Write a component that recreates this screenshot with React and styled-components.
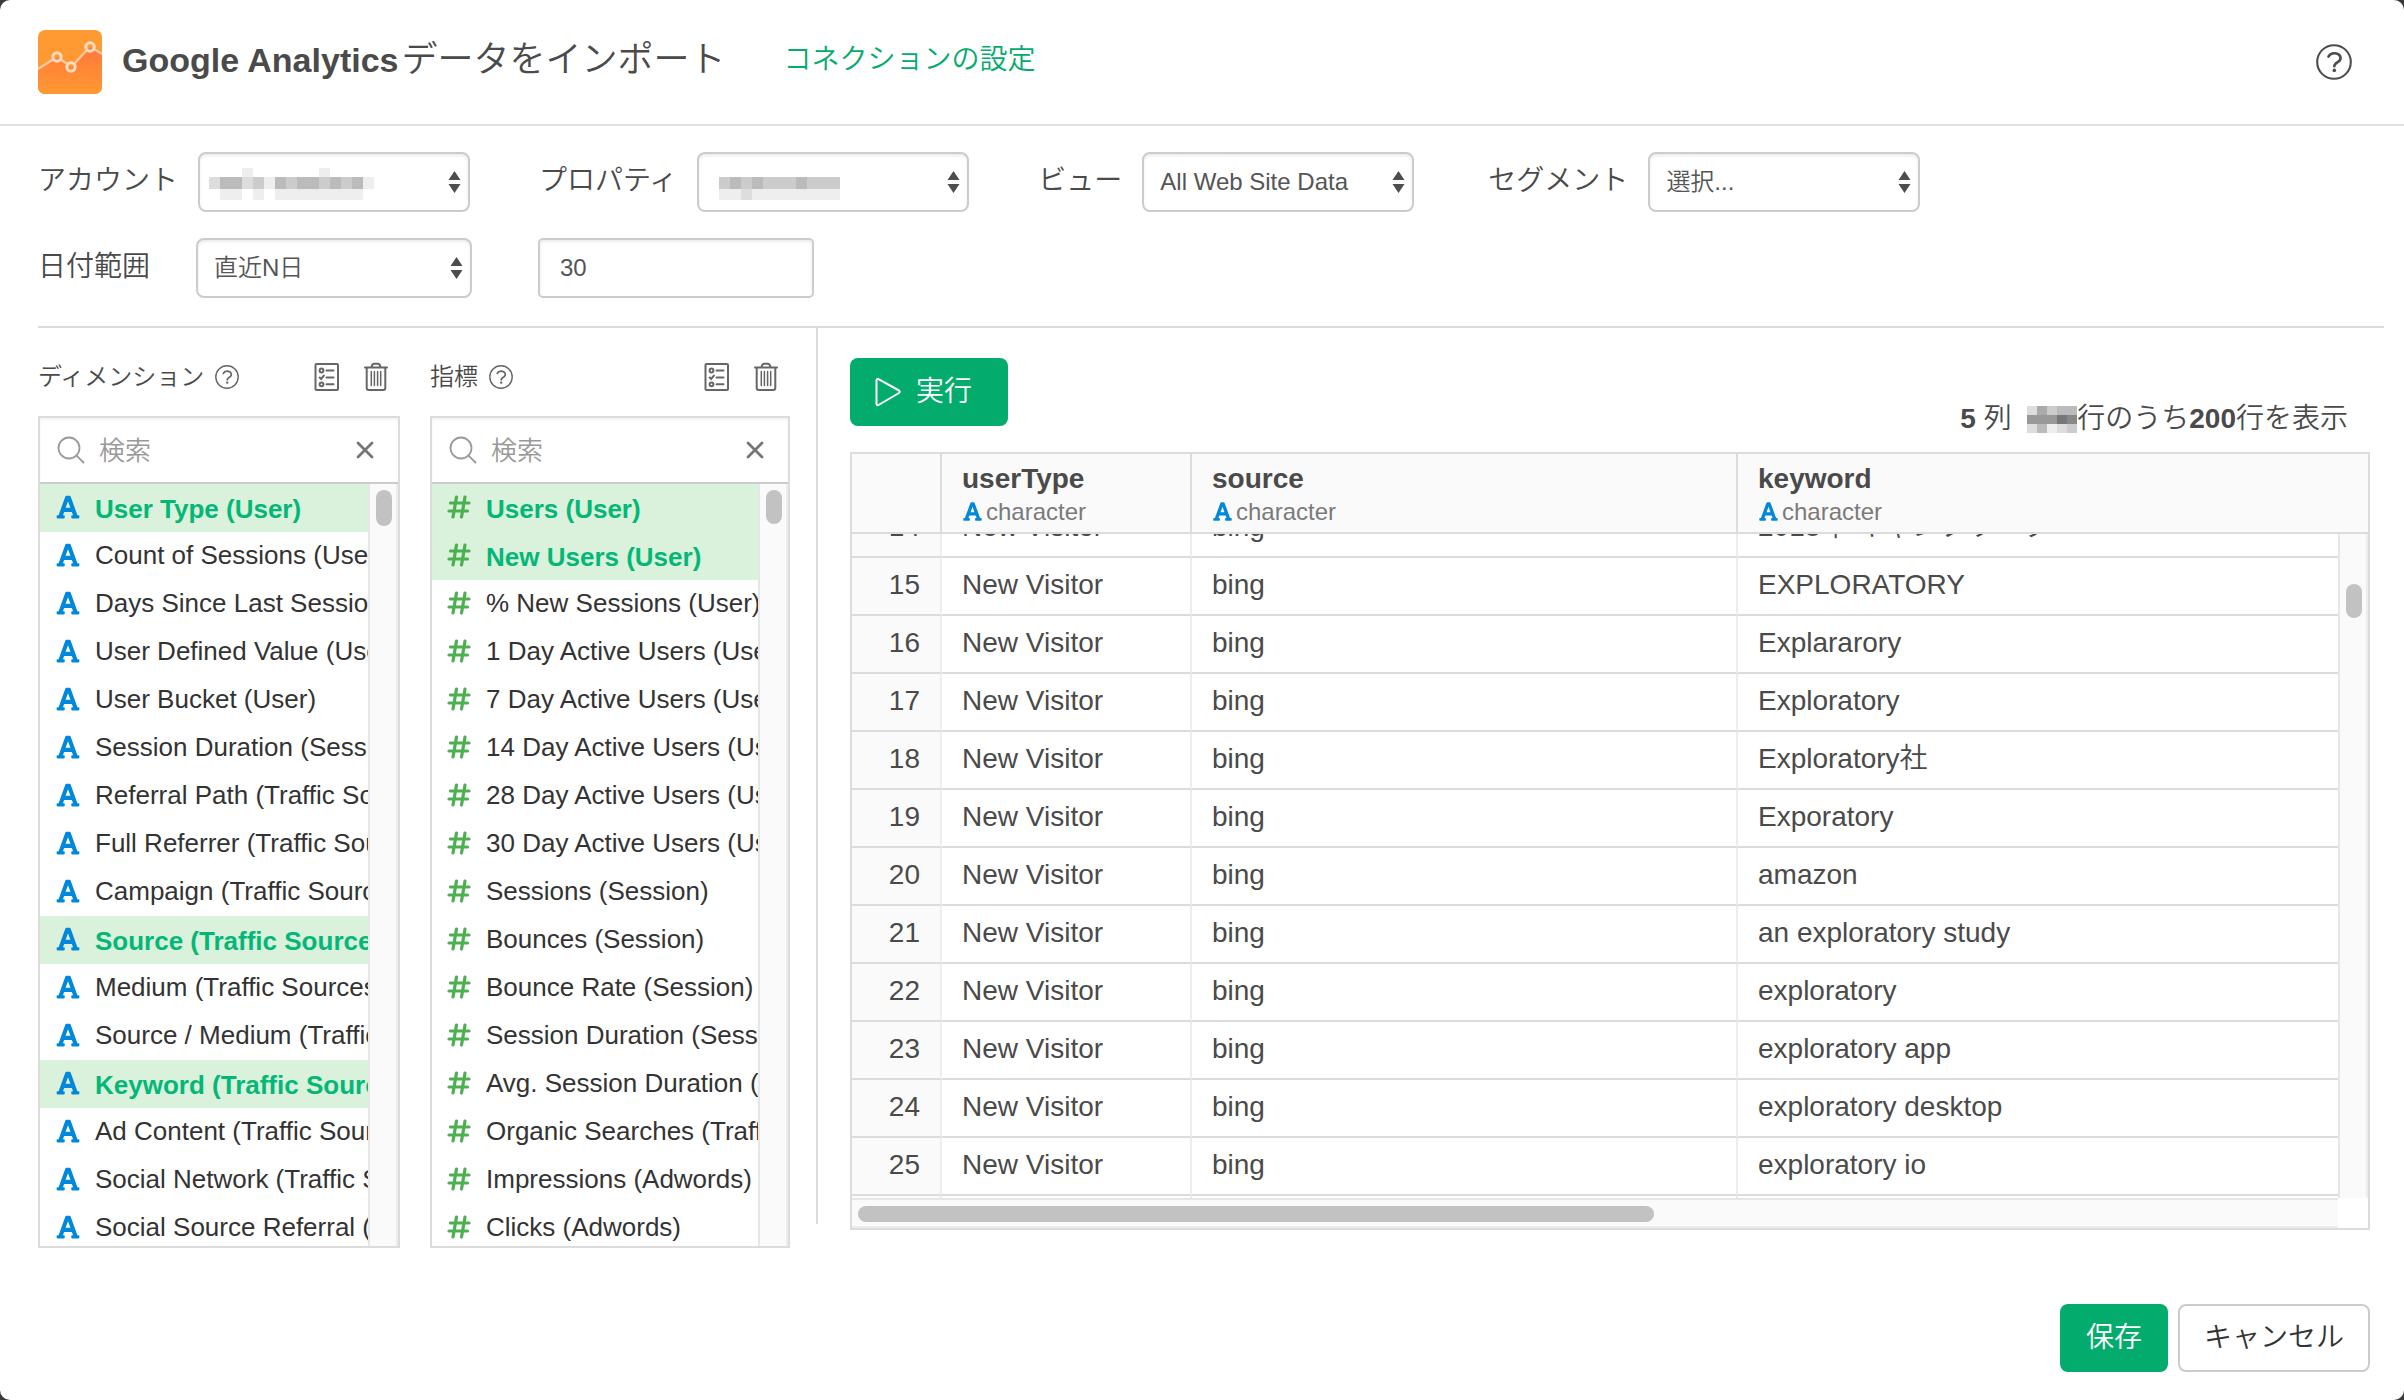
import React, { useLayoutEffect, useRef } from 'react';
import styled, { createGlobalStyle, css } from 'styled-components';
import { FaFont } from 'react-icons/fa';

const c = {
  text: '#4a4a4a',
  strong: '#333',
  muted: '#7a7a7a',
  line: '#dcdcdc',
  soft: '#ededed',
  field: '#ccc',
  green: '#03ab6c',
  selected: '#daf1dc',
  pale: '#fafafa',
  thumb: '#c2c2c2',
};

const GlobalStyle = createGlobalStyle`
  *, *::before, *::after { box-sizing: border-box; }
  body {
    margin: 0;
    background: #3a3a3a;
    color: ${c.text};
    font-family: "Liberation Sans", "Noto Sans CJK JP", sans-serif;
    font-size: 28px;
    font-weight: 350;
    line-height: 40px;
  }
  button, input, select { font: inherit; color: inherit; margin: 0; }
  strong { font-weight: 700; }
  svg { display: block; flex: none; }
`;

const Dialog = styled.main`
  display: flex;
  flex-direction: column;
  height: 100vh;
  min-height: 900px;
  background: #fff;
  border-radius: 10px;
  overflow: hidden;
`;

const Header = styled.header`
  display: flex;
  align-items: center;
  height: 126px;
  padding: 0 52px 0 38px;
  border-bottom: 2px solid #e2e2e2;
`;

const Title = styled.h1`
  margin: 0 58px 4px 20px;
  font-size: 36px;
  font-weight: 350;
  line-height: 48px;
  white-space: nowrap;
`;

const Product = styled.strong`
  margin-right: 3px;
  font-size: 34px;
`;

const HeaderLink = styled.a`
  margin: 0 auto 4px 0;
  color: ${c.green};
  text-decoration: none;
`;

const IconButton = styled.button`
  display: flex;
  padding: 0;
  border: 0;
  background: none;
  color: ${(p) => p.$color || '#666'};
  cursor: pointer;
`;

const Filters = styled.form`
  display: flex;
  flex-direction: column;
  gap: 26px;
  margin: 0 20px 0 38px;
  padding: 26px 0 28px;
  border-bottom: 2px solid ${c.line};
`;

const FilterRow = styled.div`
  display: flex;
  align-items: center;
  gap: ${(p) => p.$gap}px;
`;

const Label = styled.label`
  min-width: ${(p) => p.$min || 0}px;
  padding-bottom: 2px;
  white-space: nowrap;
`;

const Field = styled.div`
  display: flex;
  align-items: center;
  gap: ${(p) => p.$gap || 20}px;
`;

const control = css`
  width: ${(p) => p.$width}px;
  height: 60px;
  border: 2px solid ${c.field};
  border-radius: 8px;
  background: #fff;
  box-shadow: inset 0 2px 3px rgba(0, 0, 0, 0.08);
  color: #555;
  font-size: 24px;
  outline: none;
`;

const SelectBox = styled.div`
  position: relative;
  display: flex;
`;

const NativeSelect = styled.select`
  ${control}
  appearance: none;
  padding: 0 30px 0 16px;
`;

const Arrows = styled.svg`
  position: absolute;
  top: 19px;
  right: 9px;
  pointer-events: none;
`;

const Masked = styled.svg`
  position: absolute;
  top: 16px;
  left: 11px;
  pointer-events: none;
`;

const TextInput = styled.input`
  ${control}
  padding: 0 20px;
  border-radius: 5px;
`;

const Content = styled.div`
  display: flex;
  flex: 1;
  min-height: 0;
  padding: 0 34px 0 38px;
`;

const Pickers = styled.div`
  display: flex;
  gap: 30px;
  padding-right: 26px;
`;

const Rule = styled.div`
  width: 2px;
  margin-bottom: 24px;
  background: ${c.line};
`;

const Picker = styled.section`
  display: flex;
  flex-direction: column;
  width: ${(p) => p.$width}px;
`;

const PickerHead = styled.div`
  display: flex;
  align-items: center;
  height: 88px;
  padding: 10px 12px 0 0;
`;

const PickerTitle = styled.h2`
  margin: 0 11px 0 0;
  font-size: 24px;
  font-weight: 350;
  line-height: 32px;
  white-space: nowrap;
`;

const Tools = styled.div`
  display: flex;
  gap: 24px;
  margin-left: auto;
`;

const PickerBox = styled.div`
  display: flex;
  flex: 1;
  flex-direction: column;
  min-height: 0;
  border: 2px solid ${c.line};
`;

const Search = styled.div`
  display: flex;
  align-items: center;
  flex: none;
  height: 66px;
  padding: 0 24px 0 17px;
  border-bottom: 2px solid ${c.field};
  box-shadow: inset 0 2px 3px rgba(0, 0, 0, 0.05);
`;

const SearchInput = styled.input`
  flex: 1;
  min-width: 0;
  padding: 2px 14px 0;
  border: 0;
  background: none;
  font-size: 26px;
  outline: none;
  &::placeholder { color: #999; opacity: 1; }
`;

const ListArea = styled.div`
  display: flex;
  flex: 1;
  min-height: 0;
`;

const List = styled.ul`
  flex: 1;
  min-width: 0;
  margin: 0;
  padding: 0;
  overflow: hidden;
  list-style: none;
`;

const Item = styled.button`
  display: flex;
  align-items: center;
  gap: 14px;
  width: 100%;
  height: 48px;
  padding: 0 0 2px 15px;
  border: 0;
  background: ${(p) => (p.$on ? c.selected : 'transparent')};
  color: ${(p) => (p.$on ? '#03b877' : c.strong)};
  font-size: 26px;
  font-weight: ${(p) => (p.$on ? 700 : 400)};
  line-height: 36px;
  text-align: left;
  white-space: nowrap;
  overflow: hidden;
`;

const ItemName = styled.span`
  padding-top: ${(p) => (p.$on ? 4 : 0)}px;
`;

const Gutter = styled.div`
  width: 30px;
  padding: ${(p) => p.$offset}px 4px 0 6px;
  border-left: 2px solid #e6e6e6;
  border-right: 2px solid ${c.soft};
  background: ${c.pale};
`;

const Thumb = styled.div`
  height: ${(p) => p.$size}px;
  border-radius: 8px;
  background: ${c.thumb};
`;

const Result = styled.section`
  display: flex;
  flex: 1;
  flex-direction: column;
  gap: 26px;
  min-width: 0;
  padding: 30px 0 18px 32px;
`;

const Toolbar = styled.div`
  display: flex;
  align-items: flex-end;
  justify-content: space-between;
  padding-right: 22px;
`;

const Primary = styled.button`
  display: flex;
  align-items: center;
  gap: 15px;
  height: 68px;
  padding: ${(p) => (p.$run ? '0 36px 0 25px' : '0 26px')};
  border: 0;
  border-radius: 8px;
  background: ${c.green};
  color: #fff;
`;

const Secondary = styled.button`
  height: 68px;
  padding: 0 24px;
  border: 2px solid ${c.field};
  border-radius: 8px;
  background: #fff;
  color: ${c.strong};
`;

const Summary = styled.p`
  display: flex;
  align-items: center;
  margin: 0 0 -13px;
  white-space: pre;
`;

const Frame = styled.div`
  display: grid;
  flex: 1;
  grid-template-columns: minmax(0, 1fr) 30px;
  grid-template-rows: auto minmax(0, 1fr) 30px;
  min-height: 0;
  border: 2px solid ${c.line};
`;

const Table = styled.table`
  display: contents;
`;

const THead = styled.thead`
  display: block;
  grid-column: 1 / -1;
  border-bottom: 2px solid ${c.line};
  background: ${c.pale};
`;

const TBody = styled.tbody`
  display: block;
  min-width: 0;
  overflow: hidden;
`;

const Row = styled.tr`
  display: grid;
  grid-template-columns: 90px 250px 546px minmax(0, 1fr);
`;

const HeadCell = styled.th`
  height: 78px;
  padding: 8px 0 0 20px;
  border-right: ${(p) => (p.$last ? 0 : 2)}px solid ${c.line};
  font-weight: 700;
  line-height: 33px;
  text-align: left;
`;

const TypeTag = styled.span`
  display: flex;
  align-items: center;
  gap: 3px;
  color: ${c.muted};
  font-size: 24px;
  font-weight: 400;
`;

const Cell = styled.td`
  height: 58px;
  padding: 7px 0 0 20px;
  border-right: ${(p) => (p.$last ? 0 : 2)}px solid ${c.soft};
  border-bottom: 2px solid ${c.line};
  white-space: nowrap;
`;

const IndexCell = styled(Cell)`
  padding: 7px 20px 0 0;
  background: ${c.pale};
  text-align: right;
`;

const HGutter = styled.div`
  padding: 6px;
  border-top: 2px solid #e6e6e6;
  border-bottom: 2px solid ${c.soft};
  background: ${c.pale};
`;

const HThumb = styled.div`
  width: 54%;
  height: 16px;
  border-radius: 8px;
  background: ${c.thumb};
`;

const Footer = styled.footer`
  display: flex;
  justify-content: flex-end;
  gap: 10px;
  padding: 56px 34px 28px;
`;

const Logo = () => (
  <svg width="64" height="64" viewBox="0 0 64 64" aria-hidden="true">
    <defs>
      <linearGradient id="area" x1="0" y1="0" x2="0" y2="1">
        <stop offset="0.1" stopColor="#ff7b39" />
        <stop offset="1" stopColor="#ff9933" />
      </linearGradient>
      <clipPath id="tile"><rect width="64" height="64" rx="7" /></clipPath>
    </defs>
    <g clipPath="url(#tile)">
      <rect width="64" height="64" fill="#ff9a33" />
      <path d="M0 39 19 27 33 37 52 17 64 24V64H0Z" fill="url(#area)" />
      <path d="M0 39 15 29.500M22.500 29.500 29.500 34M36.500 33.500 48.500 20.500M56 19 64 24" fill="none" stroke="#ffc9a0" strokeWidth="2.400" />
      <g fill="none" stroke="#ffdcc0" strokeWidth="3">
        <circle cx="19" cy="27" r="4.200" />
        <circle cx="33" cy="37" r="4.200" />
        <circle cx="52" cy="17" r="4.200" />
      </g>
    </g>
  </svg>
);

const HelpIcon = ({ size, stroke = 1.4 }) => (
  <svg width={size} height={size} viewBox="0 0 24 24" fill="none" stroke="currentColor" strokeWidth={stroke} strokeLinecap="round" aria-hidden="true">
    <circle cx="12" cy="12" r="11.200" />
    <path d="M8.300 8.400C9.300 6.200 12 5.900 13.700 6.300 16.800 7.200 17.200 10.400 14.800 11.900 13.100 12.900 12.200 13.400 12.200 14.800" strokeWidth={stroke * 1.25} />
    <circle cx="12.200" cy="17.600" r="1.200" fill="currentColor" stroke="none" />
  </svg>
);

const ListIcon = () => (
  <svg width="26" height="30" viewBox="0 0 26 30" fill="none" stroke="currentColor" strokeWidth="2" strokeLinecap="round" aria-hidden="true">
    <rect x="1.500" y="2" width="22.500" height="26" rx="1" />
    <circle cx="7.500" cy="8.500" r="1.900" />
    <circle cx="7.500" cy="22.300" r="1.900" />
    <path d="M12.500 8.500h7M12.500 15.500h7M12.500 22.300h7M5.700 15.500l1.400 1.500 2.800-3.400" />
  </svg>
);

const TrashIcon = () => (
  <svg width="24" height="30" viewBox="0 0 24 30" fill="none" stroke="currentColor" strokeWidth="2" strokeLinecap="round" strokeLinejoin="round" aria-hidden="true">
    <path d="M1 5.500h22M7.500 5c.5-2.500 1.500-3.300 3-3.300h3c1.500 0 2.500.8 3 3.300M2.700 6v20c0 1.300.7 2 2 2h14.600c1.300 0 2-.7 2-2V6" />
    <path d="M7.300 9.500v14M10.400 9.500v14M13.600 9.500v14M16.700 9.500v14" strokeWidth="1.500" />
  </svg>
);

const SearchIcon = () => (
  <svg width="28" height="28" viewBox="0 0 28 28" fill="none" stroke="#999" strokeWidth="1.800" strokeLinecap="round" aria-hidden="true">
    <circle cx="12" cy="12" r="10.500" />
    <path d="M19.800 19.800 26.500 26.500" />
  </svg>
);

const CloseIcon = () => (
  <svg width="18" height="18" viewBox="0 0 18 18" fill="none" stroke="#757575" strokeWidth="2.800" strokeLinecap="round" aria-hidden="true">
    <path d="M2 2 16 16M16 2 2 16" />
  </svg>
);

const CharIcon = ({ size }) => <FaFont size={size} color="#0288d8" aria-hidden="true" />;

const HashIcon = () => (
  <svg width="25" height="26" viewBox="0 0 25 26" fill="none" stroke="#4caf50" strokeWidth="3.200" strokeLinecap="round" aria-hidden="true">
    <path d="M3.500 9h18.500M2 17h18.500M9.500 3 6 23M18 3 14.500 23" />
  </svg>
);

const PlayIcon = () => (
  <svg width="26" height="30" viewBox="0 0 26 30" fill="none" stroke="#fff" strokeWidth="2" strokeLinejoin="round" aria-hidden="true">
    <path d="M1.500 3.500c0-1.500 1-2 2-1.300L24 13.500c1 .7 1 1.700 0 2.500L3.500 28c-1 .6-2 0-2-1.300Z" />
  </svg>
);

/* Redacted value: each string is a row of grey cells, one hex digit per cell. */
const Mosaic = ({ rows, cell, heights, as: Box = 'svg' }) => {
  const tops = heights.map((_, i) => heights.slice(0, i).reduce((a, b) => a + b, 0));
  const width = rows[0].length * cell;
  const height = heights.reduce((a, b) => a + b, 0);
  return (
    <Box width={width} height={height} aria-hidden="true" shapeRendering="crispEdges">
      {rows.map((row, y) =>
        [...row].map((v, x) => (
          <rect key={`${x}-${y}`} x={x * cell} y={tops[y]} width={cell} height={heights[y]} fill={`#${v}${v}${v}`} />
        ))
      )}
    </Box>
  );
};

const Select = ({ id, label, value, width = 272, mask, labelMin, gap }) => (
  <Field $gap={gap}>
    <Label htmlFor={id} $min={labelMin}>{label}</Label>
    <SelectBox>
      <NativeSelect id={id} $width={width} defaultValue={value}>
        <option value={value}>{value}</option>
      </NativeSelect>
      {mask && <Mosaic as={Masked} rows={mask} cell={11} heights={[9, 12, 11]} />}
      <Arrows width="13" height="22" viewBox="0 0 13 22" fill="#4d4d4d" aria-hidden="true">
        <path d="M6.500 0 12.500 9H.5ZM6.500 22 12.500 13H.5Z" />
      </Arrows>
    </SelectBox>
  </Field>
);

const dimensions = [
  ['User Type (User)', true],
  ['Count of Sessions (User)'],
  ['Days Since Last Session (User)'],
  ['User Defined Value (User)'],
  ['User Bucket (User)'],
  ['Session Duration (Session)'],
  ['Referral Path (Traffic Sources)'],
  ['Full Referrer (Traffic Sources)'],
  ['Campaign (Traffic Sources)'],
  ['Source (Traffic Sources)', true],
  ['Medium (Traffic Sources)'],
  ['Source / Medium (Traffic Sources)'],
  ['Keyword (Traffic Sources)', true],
  ['Ad Content (Traffic Sources)'],
  ['Social Network (Traffic Sources)'],
  ['Social Source Referral (Traffic Sources)'],
];

const metrics = [
  ['Users (User)', true],
  ['New Users (User)', true],
  ['% New Sessions (User)'],
  ['1 Day Active Users (User)'],
  ['7 Day Active Users (User)'],
  ['14 Day Active Users (User)'],
  ['28 Day Active Users (User)'],
  ['30 Day Active Users (User)'],
  ['Sessions (Session)'],
  ['Bounces (Session)'],
  ['Bounce Rate (Session)'],
  ['Session Duration (Session)'],
  ['Avg. Session Duration (Session)'],
  ['Organic Searches (Traffic Sources)'],
  ['Impressions (Adwords)'],
  ['Clicks (Adwords)'],
];

const FieldPicker = ({ title, items, icon, width, thumb }) => (
  <Picker $width={width}>
    <PickerHead>
      <PickerTitle>{title}</PickerTitle>
      <IconButton type="button" aria-label="ヘルプ"><HelpIcon size={24} /></IconButton>
      <Tools>
        <IconButton type="button" aria-label="一覧"><ListIcon /></IconButton>
        <IconButton type="button" aria-label="クリア"><TrashIcon /></IconButton>
      </Tools>
    </PickerHead>
    <PickerBox>
      <Search>
        <SearchIcon />
        <SearchInput type="text" placeholder="検索" aria-label={`${title} 検索`} />
        <IconButton type="button" aria-label="検索をクリア"><CloseIcon /></IconButton>
      </Search>
      <ListArea>
        <List>
          {items.map(([name, on]) => (
            <li key={name}>
              <Item type="button" $on={on} aria-pressed={!!on}>
                {icon}
                <ItemName $on={on}>{name}</ItemName>
              </Item>
            </li>
          ))}
        </List>
        <Gutter $offset={6}><Thumb $size={thumb} /></Gutter>
      </ListArea>
    </PickerBox>
  </Picker>
);

const keywords = [
  '2018年 キャンプワーク', 'EXPLORATORY', 'Explararory', 'Exploratory', 'Exploratory社', 'Exporatory',
  'amazon', 'an exploratory study', 'exploratory', 'exploratory app', 'exploratory desktop', 'exploratory io',
];

const ResultTable = () => {
  const body = useRef(null);
  useLayoutEffect(() => {
    body.current.scrollTop = 34;
  }, []);
  return (
    <Frame>
      <Table>
        <THead>
          <Row>
            <HeadCell scope="col" aria-label="#" />
            {['userType', 'source', 'keyword'].map((name, i) => (
              <HeadCell key={name} scope="col" $last={i === 2}>
                {name}
                <TypeTag><CharIcon size={21} />character</TypeTag>
              </HeadCell>
            ))}
          </Row>
        </THead>
        <TBody ref={body}>
          {[...keywords, 'exploratory r'].map((keyword, i) => (
            <Row key={keyword}>
              <IndexCell>{i + 14}</IndexCell>
              <Cell>New Visitor</Cell>
              <Cell>bing</Cell>
              <Cell $last>{keyword}</Cell>
            </Row>
          ))}
        </TBody>
      </Table>
      <Gutter $offset={50}><Thumb $size={34} /></Gutter>
      <HGutter><HThumb /></HGutter>
    </Frame>
  );
};

export default function App() {
  return (
    <>
      <GlobalStyle />
      <Dialog>
        <Header>
          <Logo />
          <Title><Product>Google Analytics</Product>データをインポート</Title>
          <HeaderLink href="#connection">コネクションの設定</HeaderLink>
          <IconButton type="button" $color="#4d4d4d" aria-label="ヘルプ"><HelpIcon size={36} /></IconButton>
        </Header>

        <Filters onSubmit={(e) => e.preventDefault()}>
          <FilterRow $gap={74}>
            <FilterRow $gap={69}>
              <Select id="account" label="アカウント" value="" mask={['fffeffffffefffff', 'dbbdcebcbbcbcbef', 'feefefeeeeeeeeff']} />
              <Select id="property" label="プロパティ" value="" mask={['fffffffffffff', 'fcbcbcccbcccf', 'feedeeeeeeeef']} />
              <Select id="view" label="ビュー" value="All Web Site Data" />
            </FilterRow>
            <Select id="segment" label="セグメント" value="選択..." />
          </FilterRow>
          <FilterRow $gap={66}>
            <Select id="range" label="日付範囲" value="直近N日" width={276} labelMin={140} gap={18} />
            <TextInput type="text" defaultValue="30" aria-label="日数" $width={276} />
          </FilterRow>
        </Filters>

        <Content>
          <Pickers>
            <FieldPicker title="ディメンション" items={dimensions} width={362} thumb={36} icon={<CharIcon size={26} />} />
            <FieldPicker title="指標" items={metrics} width={360} thumb={34} icon={<HashIcon />} />
          </Pickers>
          <Rule />
          <Result>
            <Toolbar>
              <Primary type="button" $run><PlayIcon />実行</Primary>
              <Summary>
                <strong>5</strong>{' 列  '}
                <Mosaic rows={['dacbb', '99978', 'dbedc']} cell={10} heights={[9, 9, 9]} />
                行のうち<strong>200</strong>行を表示
              </Summary>
            </Toolbar>
            <ResultTable />
          </Result>
        </Content>

        <Footer>
          <Primary type="button">保存</Primary>
          <Secondary type="button">キャンセル</Secondary>
        </Footer>
      </Dialog>
    </>
  );
}
